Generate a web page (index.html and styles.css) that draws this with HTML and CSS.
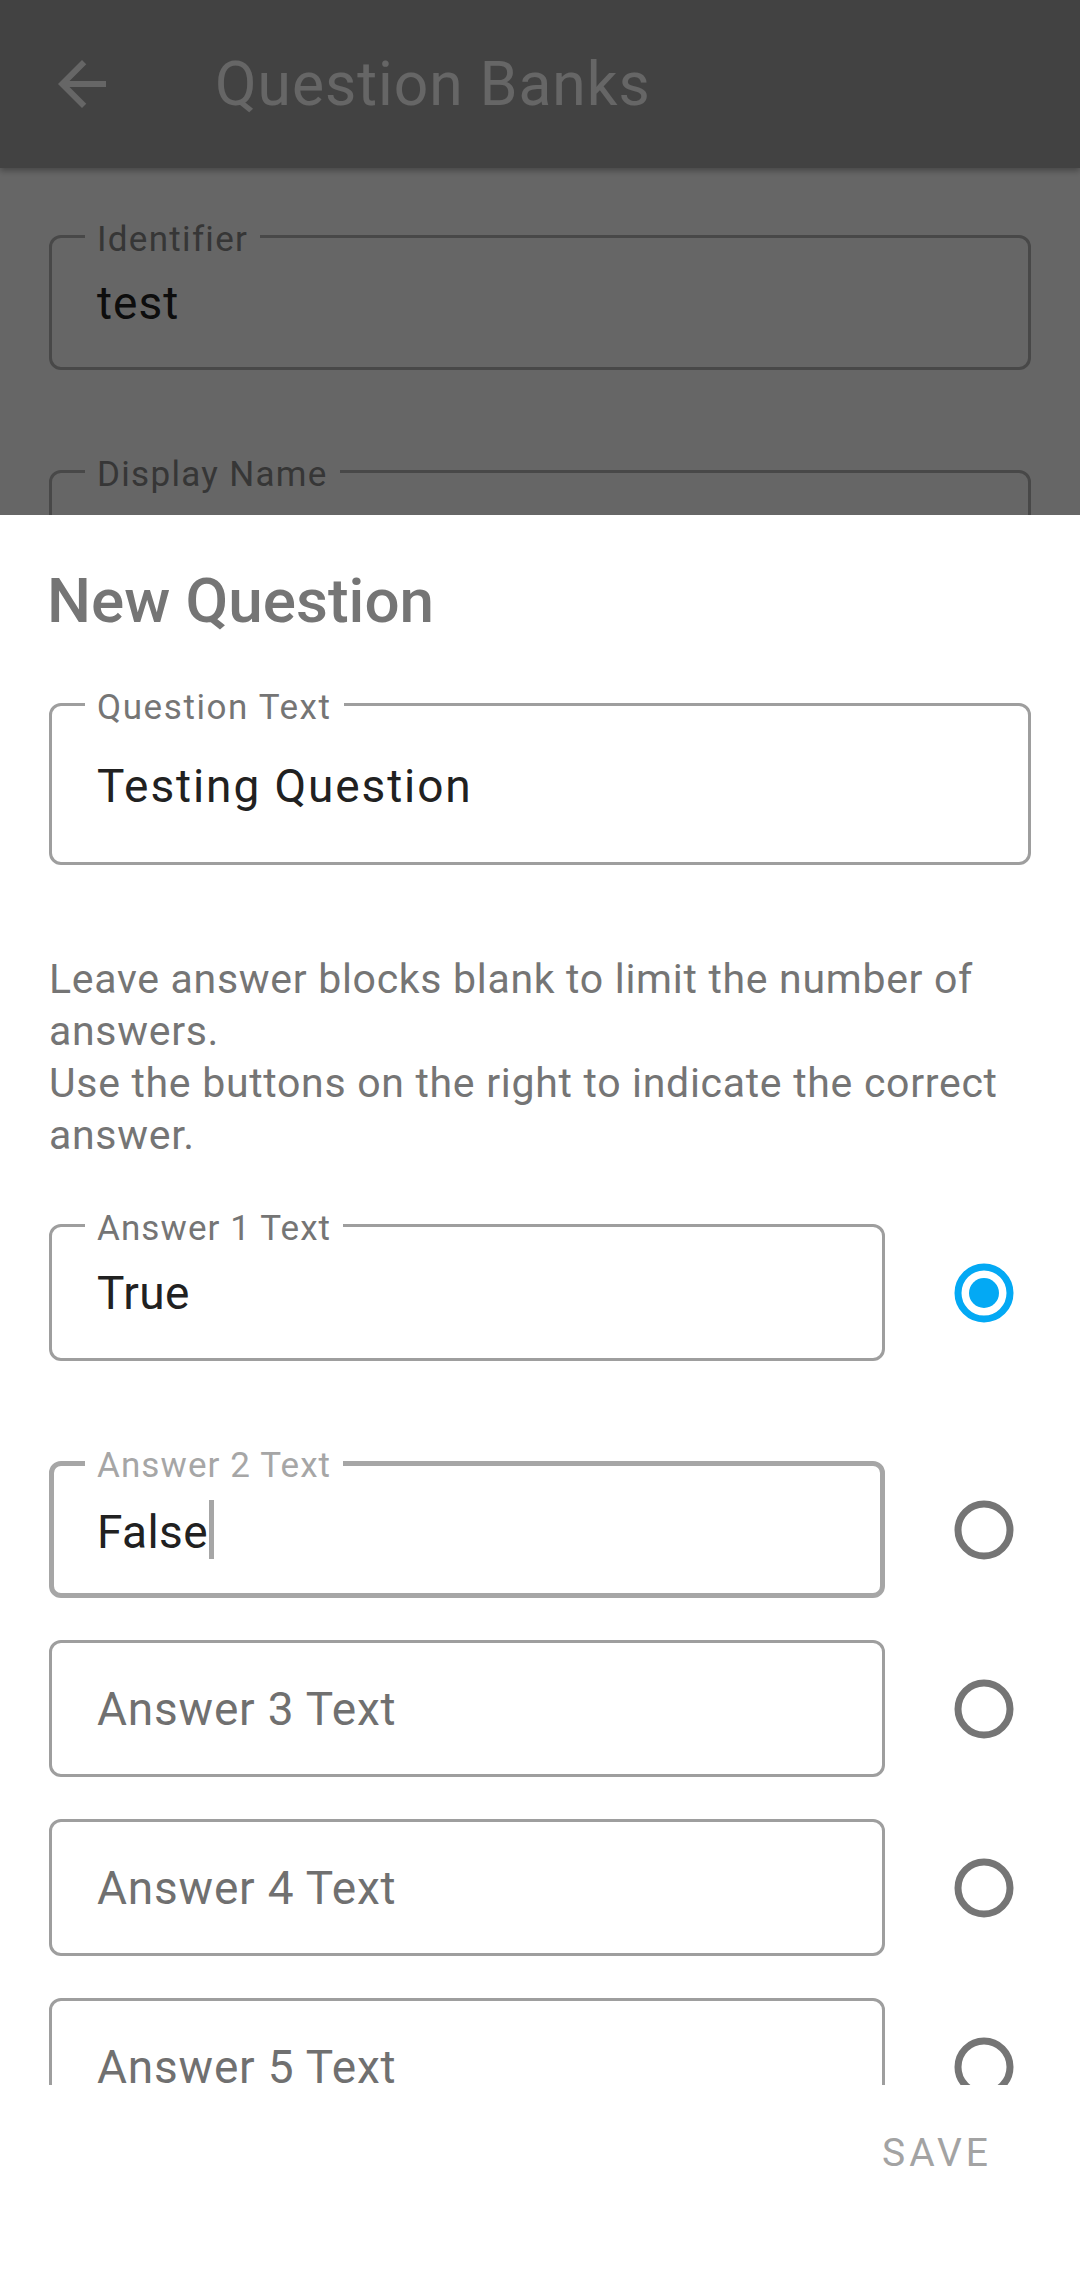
FILE: index.html
```html
<!DOCTYPE html>
<html lang="en">
<head>
<meta charset="utf-8">
<title>Question Banks</title>
<link rel="stylesheet" href="styles.css">
</head>
<body>
<div class="screen">
  <header class="appbar">
    <svg class="appbar-back" viewBox="0 0 24 24" aria-hidden="true"><path d="M20 11H7.83l5.59-5.59L12 4l-8 8 8 8 1.41-1.41L7.83 13H20v-2z"/></svg>
    <h1 class="appbar-title">Question Banks</h1>
  </header>

  <main class="page">
    <div class="bg-field">
      <span class="bg-label">Identifier</span>
      <span class="bg-value">test</span>
    </div>
    <div class="bg-field">
      <span class="bg-label">Display Name</span>
      <span class="bg-value"></span>
    </div>
  </main>

  <div class="scrim"></div>

  <section class="sheet">
    <div class="sheet-body">
      <h2 class="sheet-title">New Question</h2>

      <div class="field field--question">
        <span class="field-label field-label--wide">Question Text</span>
        <span class="field-value field-value--wide">Testing Question</span>
      </div>

      <div class="helper">
        <p>Leave answer blocks blank to limit the number of answers.</p>
        <p>Use the buttons on the right to indicate the correct answer.</p>
      </div>

      <div class="answers">
        <div class="answer-row answer-row--first">
          <div class="field field--answer">
            <span class="field-label">Answer 1 Text</span>
            <span class="field-value">True</span>
          </div>
          <svg class="radio radio--on" viewBox="0 0 60 60" aria-hidden="true"><circle cx="30" cy="30" r="26" /><circle class="radio-dot" cx="30" cy="30" r="15" /></svg>
        </div>
        <div class="answer-row">
          <div class="field field--answer field--focused">
            <span class="field-label">Answer 2 Text</span>
            <span class="field-value">False<span class="caret"></span></span>
          </div>
          <svg class="radio" viewBox="0 0 60 60" aria-hidden="true"><circle cx="30" cy="30" r="26" /></svg>
        </div>
        <div class="answer-row">
          <div class="field field--answer">
            <span class="field-placeholder">Answer 3 Text</span>
          </div>
          <svg class="radio" viewBox="0 0 60 60" aria-hidden="true"><circle cx="30" cy="30" r="26" /></svg>
        </div>
        <div class="answer-row">
          <div class="field field--answer">
            <span class="field-placeholder">Answer 4 Text</span>
          </div>
          <svg class="radio" viewBox="0 0 60 60" aria-hidden="true"><circle cx="30" cy="30" r="26" /></svg>
        </div>
        <div class="answer-row">
          <div class="field field--answer">
            <span class="field-placeholder">Answer 5 Text</span>
          </div>
          <svg class="radio" viewBox="0 0 60 60" aria-hidden="true"><circle cx="30" cy="30" r="26" /></svg>
        </div>
      </div>
    </div>

    <div class="sheet-actions">
      <button class="btn-save" type="button">SAVE</button>
    </div>
  </section>
</div>
</body>
</html>
```

FILE: styles.css
```css
* {
  box-sizing: border-box;
  margin: 0;
  padding: 0;
}

html,
body {
  width: 1080px;
  height: 2275px;
  overflow: hidden;
}

body {
  font-family: Roboto, "Noto Sans", "Liberation Sans", sans-serif;
  background: #ffffff;
  color: #212121;
}

.screen {
  position: relative;
  width: 1080px;
  height: 2275px;
  overflow: hidden;
  background: #ffffff;
}

/* ---------- app bar (behind the scrim) ---------- */
.appbar {
  position: relative;
  height: 168px;
  background: #a6a6a6;
  display: flex;
  align-items: center;
  box-shadow: 0 3px 6px rgba(0, 0, 0, 0.3);
}

.appbar-back {
  flex: none;
  width: 72px;
  height: 72px;
  margin-left: 46px;
  fill: #ffffff;
}

.appbar-title {
  margin-left: 97px;
  font-size: 60.5px;
  line-height: 61px;
  font-weight: 400;
  letter-spacing: 1px;
  color: #ffffff;
}

/* ---------- page behind the sheet ---------- */
.page {
  display: flex;
  flex-direction: column;
  gap: 100px;
  padding: 67px 49px 0;
}

.bg-field {
  position: relative;
  height: 135px;
  border: 3px solid #b4b4b4;
  border-radius: 12px;
  display: flex;
  align-items: center;
  padding-left: 45px;
}

.bg-label {
  position: absolute;
  top: -15px;
  left: 33px;
  padding: 0 12px;
  background: #ffffff;
  font-size: 35px;
  line-height: 34px;
  letter-spacing: 1.3px;
  color: #878787;
}

.bg-value {
  font-size: 46px;
  line-height: 46px;
  letter-spacing: 1px;
  color: #212121;
}

.scrim {
  position: absolute;
  inset: 0;
  background: rgba(0, 0, 0, 0.6);
}

/* ---------- bottom sheet ---------- */
.sheet {
  position: absolute;
  left: 0;
  right: 0;
  top: 515px;
  bottom: 0;
  background: #ffffff;
  display: flex;
  flex-direction: column;
}

.sheet-body {
  flex: 1;
  overflow: hidden;
  padding: 55px 49px 0;
}

.sheet-title {
  margin-left: -2px;
  font-size: 62px;
  line-height: 62px;
  font-weight: 500;
  color: #757575;
}

.field {
  position: relative;
  border: 3px solid #9e9e9e;
  border-radius: 12px;
  display: flex;
  align-items: center;
  padding: 0 30px 0 45px;
}

.field-label {
  position: absolute;
  top: -15px;
  left: 33px;
  padding: 0 12px;
  background: #ffffff;
  font-size: 35px;
  line-height: 34px;
  letter-spacing: 1.1px;
  color: #757575;
  white-space: nowrap;
}

.field-label--wide {
  letter-spacing: 1.6px;
}

.field-value {
  font-size: 46px;
  line-height: 46px;
  letter-spacing: 0.4px;
  color: #212121;
  white-space: nowrap;
}

.field-value--wide {
  letter-spacing: 1.9px;
}

.field-placeholder {
  font-size: 46px;
  line-height: 46px;
  letter-spacing: 0.8px;
  color: #707070;
  white-space: nowrap;
}

.field--question {
  margin-top: 71px;
  height: 162px;
  align-items: flex-start;
  padding-top: 57px;
}

.helper {
  margin-top: 88px;
  font-size: 41px;
  line-height: 52px;
  letter-spacing: 0.7px;
  color: #757575;
}

.answers {
  margin-top: 63px;
  display: flex;
  flex-direction: column;
  gap: 42px;
}

.answer-row {
  display: flex;
  align-items: center;
}

.answer-row--first {
  margin-bottom: 58px;
}

.field--answer {
  flex: none;
  width: 836px;
  height: 137px;
}

.field--focused {
  border-width: 5px;
  border-color: #a6a6a6;
  padding-left: 43px;
}

.field--focused .field-label {
  top: -17px;
  left: 31px;
  color: #a6a6a6;
}

.caret {
  display: inline-block;
  width: 5px;
  height: 59px;
  margin-left: 1px;
  vertical-align: -11px;
  background: #a6a6a6;
}

.radio {
  flex: none;
  width: 60px;
  height: 60px;
  margin-left: 69px;
  fill: none;
  stroke: #757575;
  stroke-width: 7;
}

.radio--on {
  stroke: #03a9f4;
}

.radio .radio-dot {
  fill: #03a9f4;
  stroke: none;
}

.sheet-actions {
  flex: none;
  height: 190px;
  display: flex;
  justify-content: flex-end;
  align-items: flex-start;
  padding: 49px 88px 0 0;
}

.btn-save {
  border: none;
  background: none;
  font-family: Roboto, "Noto Sans", sans-serif;
  font-size: 39px;
  line-height: 39px;
  font-weight: 400;
  letter-spacing: 4px;
  color: #a3a3a3;
}
```
